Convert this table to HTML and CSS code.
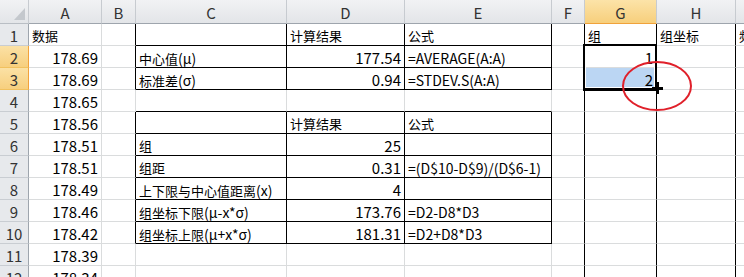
FILE: index.html
```html
<!DOCTYPE html>
<html lang="zh">
<head>
<meta charset="utf-8">
<link rel="stylesheet" href="styles.css">
</head>
<body>
<div class="sheet">
  <div class="grid">
    <!-- header row -->
    <div class="h corner"><span class="tri"></span></div>
    <div class="h col">A</div>
    <div class="h col">B</div>
    <div class="h col">C</div>
    <div class="h col">D</div>
    <div class="h col">E</div>
    <div class="h col">F</div>
    <div class="h col sel">G</div>
    <div class="h col">H</div>
    <div class="h col">I</div>

    <!-- row 1 -->
    <div class="h row">1</div>
    <div class="c"><span class="z">数据</span></div>
    <div class="c kr"></div>
    <div class="c kr kb"></div>
    <div class="c kr kb"><span class="z">计算结果</span></div>
    <div class="c kr kb"><span class="z">公式</span></div>
    <div class="c kr"></div>
    <div class="c kr"><span class="z">组</span></div>
    <div class="c kr"><span class="z">组坐标</span></div>
    <div class="c"><span class="z">频数</span></div>

    <!-- row 2 -->
    <div class="h row sel">2</div>
    <div class="c r n">178.69</div>
    <div class="c kr"></div>
    <div class="c kr kb"><span class="z">中心值</span>(μ)</div>
    <div class="c kr kb r n">177.54</div>
    <div class="c kr kb">=AVERAGE(A:A)</div>
    <div class="c kr"></div>
    <div class="c kr r n">1</div>
    <div class="c kr"></div>
    <div class="c"></div>

    <!-- row 3 -->
    <div class="h row sel">3</div>
    <div class="c r n">178.69</div>
    <div class="c kr"></div>
    <div class="c kr kb"><span class="z">标准差</span>(σ)</div>
    <div class="c kr kb r n">0.94</div>
    <div class="c kr kb">=STDEV.S(A:A)</div>
    <div class="c kr"></div>
    <div class="c kr r n hl">2</div>
    <div class="c kr"></div>
    <div class="c"></div>

    <!-- row 4 -->
    <div class="h row">4</div>
    <div class="c r n">178.65</div>
    <div class="c"></div>
    <div class="c kb"></div>
    <div class="c kb"></div>
    <div class="c kb"></div>
    <div class="c kr"></div>
    <div class="c kr"></div>
    <div class="c kr"></div>
    <div class="c"></div>

    <!-- row 5 -->
    <div class="h row">5</div>
    <div class="c r n">178.56</div>
    <div class="c kr"></div>
    <div class="c kr kb"></div>
    <div class="c kr kb"><span class="z">计算结果</span></div>
    <div class="c kr kb"><span class="z">公式</span></div>
    <div class="c kr"></div>
    <div class="c kr"></div>
    <div class="c kr"></div>
    <div class="c"></div>

    <!-- row 6 -->
    <div class="h row">6</div>
    <div class="c r n">178.51</div>
    <div class="c kr"></div>
    <div class="c kr kb"><span class="z">组</span></div>
    <div class="c kr kb r n">25</div>
    <div class="c kr kb"></div>
    <div class="c kr"></div>
    <div class="c kr"></div>
    <div class="c kr"></div>
    <div class="c"></div>

    <!-- row 7 -->
    <div class="h row">7</div>
    <div class="c r n">178.51</div>
    <div class="c kr"></div>
    <div class="c kr kb"><span class="z">组距</span></div>
    <div class="c kr kb r n">0.31</div>
    <div class="c kr kb">=(D$10-D$9)/(D$6-1)</div>
    <div class="c kr"></div>
    <div class="c kr"></div>
    <div class="c kr"></div>
    <div class="c"></div>

    <!-- row 8 -->
    <div class="h row">8</div>
    <div class="c r n">178.49</div>
    <div class="c kr"></div>
    <div class="c kr kb"><span class="z">上下限与中心值距离</span>(x)</div>
    <div class="c kr kb r n">4</div>
    <div class="c kr kb"></div>
    <div class="c kr"></div>
    <div class="c kr"></div>
    <div class="c kr"></div>
    <div class="c"></div>

    <!-- row 9 -->
    <div class="h row">9</div>
    <div class="c r n">178.46</div>
    <div class="c kr"></div>
    <div class="c kr kb"><span class="z">组坐标下限</span>(μ-x*σ)</div>
    <div class="c kr kb r n">173.76</div>
    <div class="c kr kb">=D2-D8*D3</div>
    <div class="c kr"></div>
    <div class="c kr"></div>
    <div class="c kr"></div>
    <div class="c"></div>

    <!-- row 10 -->
    <div class="h row">10</div>
    <div class="c r n">178.42</div>
    <div class="c kr"></div>
    <div class="c kr kb"><span class="z">组坐标上限</span>(μ+x*σ)</div>
    <div class="c kr kb r n">181.31</div>
    <div class="c kr kb">=D2+D8*D3</div>
    <div class="c kr"></div>
    <div class="c kr"></div>
    <div class="c kr"></div>
    <div class="c"></div>

    <!-- row 11 -->
    <div class="h row">11</div>
    <div class="c r n">178.39</div>
    <div class="c"></div>
    <div class="c"></div>
    <div class="c"></div>
    <div class="c"></div>
    <div class="c kr"></div>
    <div class="c kr"></div>
    <div class="c kr"></div>
    <div class="c"></div>

    <!-- row 12 -->
    <div class="h row">12</div>
    <div class="c r n">178.34</div>
    <div class="c"></div>
    <div class="c"></div>
    <div class="c"></div>
    <div class="c"></div>
    <div class="c kr"></div>
    <div class="c kr"></div>
    <div class="c kr"></div>
    <div class="c"></div>
  </div>

  <div class="selection"></div>
  <svg class="overlay" width="744" height="277" viewBox="0 0 744 277">
    <ellipse cx="657" cy="86" rx="34" ry="24" fill="none" stroke="#e0202a" stroke-width="2"/>
    <rect x="652" y="87" width="11" height="3" fill="#000"/>
    <rect x="656" y="82" width="3" height="12" fill="#000"/>
  </svg>
</div>
</body>
</html>
```

FILE: styles.css
```css
html, body {
  margin: 0;
  padding: 0;
  background: #fff;
}

.sheet {
  position: relative;
  width: 744px;
  height: 277px;
  overflow: hidden;
  font-family: "Noto Sans CJK SC", "Noto Sans", sans-serif;
  font-size: 14px;
  color: #000;
}

.grid {
  display: grid;
  grid-template-columns: 29px 73px 34px 151px 118px 147px 33px 72px 79px 40px;
  grid-template-rows: 24px repeat(12, 22px);
}

.c {
  box-sizing: border-box;
  border-right: 1px solid #dadcdd;
  border-bottom: 1px solid #dadcdd;
  display: flex;
  align-items: baseline;
  padding: 3px 3px 0 3px;
  line-height: 18px;
  white-space: nowrap;
  overflow: hidden;
}

.c .z { font-size: 13px; }
.c.n { font-size: 15px; padding-right: 3px; }
.c.r { justify-content: flex-end; }
.c.kr { border-right-color: #000; }
.c.kb { border-bottom-color: #000; }
.c.hl { background: #bbd6f3; }

.h {
  box-sizing: border-box;
  background: linear-gradient(#f1f2f4, #e3e5e8);
  border-right: 1px solid #c7cbd0;
  border-bottom: 1px solid #b9bec4;
  color: #333;
  display: flex;
  align-items: center;
  justify-content: center;
  font-family: "Noto Sans CJK SC", "Noto Sans", sans-serif;
  font-size: 15px;
}

.h.row {
  background: #e7e9ec;
  border-bottom-color: #c9cdd2;
  border-right-color: #9ea5ad;
  padding-top: 1px;
}

.h.col {
  border-bottom-color: #9ea5ad;
  padding-top: 2px;
}

.h.row.sel {
  background: linear-gradient(#fbe1a5, #f7cf7e);
  border-right-color: #f2a23a;
  border-bottom-color: #f1c15f;
}

.h.col.sel {
  background: linear-gradient(#fce3a8, #f7cf7c);
  border-bottom-color: #f0a23b;
}

.corner {
  position: relative;
}

.tri {
  position: absolute;
  right: 3px;
  bottom: 3px;
  width: 0;
  height: 0;
  border-left: 11px solid transparent;
  border-bottom: 12px solid #c4c8cd;
}

.selection {
  position: absolute;
  left: 583px;
  top: 44px;
  width: 70px;
  height: 42px;
  border: 2px solid #000;
  border-bottom-width: 3px;
  box-shadow: inset 0 0 0 1px #fff;
}

.overlay {
  position: absolute;
  left: 0;
  top: 0;
  pointer-events: none;
}
```
